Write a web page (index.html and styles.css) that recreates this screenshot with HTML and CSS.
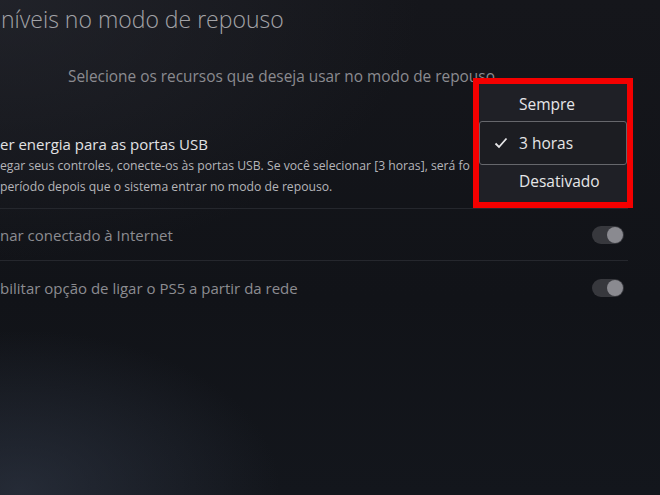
FILE: index.html
```html
<!DOCTYPE html>
<html lang="pt-BR">
  <head>
    <meta charset="UTF-8" />
    <meta name="viewport" content="width=device-width, initial-scale=1.0" />
    <title>Recursos disponíveis no modo de repouso</title>
    <link rel="stylesheet" href="styles.css">
  </head>
  <body>
    <div class="screen">
      <h1 class="page-title">níveis no modo de repouso</h1>
      <p class="page-hint">Selecione os recursos que deseja usar no modo de repouso</p>

      <div class="settings">
        <div class="setting setting-usb">
          <div class="setting-text">
            <div class="setting-name">er energia para as portas USB</div>
            <div class="setting-desc">
              egar seus controles, conecte-os às portas USB. Se você selecionar [3 horas], será fo<br>
              período depois que o sistema entrar no modo de repouso.
            </div>
          </div>
        </div>

        <div class="setting setting-off">
          <div class="setting-text">
            <div class="setting-name">nar conectado à Internet</div>
          </div>
          <div class="toggle"><span class="knob"></span></div>
        </div>

        <div class="setting setting-off">
          <div class="setting-text">
            <div class="setting-name">bilitar opção de ligar o PS5 a partir da rede</div>
          </div>
          <div class="toggle"><span class="knob"></span></div>
        </div>
      </div>

      <!-- dropdown opened over the USB option -->
      <div class="menu">
        <div class="menu-item first">Sempre</div>
        <div class="menu-item selected">
          <svg class="check" width="14" height="12" viewBox="0 0 14 12">
            <path d="M1.5 6.5 L5 10 L12.5 1.5" fill="none" stroke="#e6e6e8" stroke-width="1.8" />
          </svg>
          3 horas
        </div>
        <div class="menu-item last">Desativado</div>
      </div>
    </div>
  </body>
</html>
```

FILE: styles.css
```css
html, body {
  margin: 0;
  padding: 0;
  width: 660px;
  height: 495px;
  overflow: hidden;
  background: #121419;
}

body {
  font-family: "Open Sans", "Noto Sans", sans-serif;
  color: #e4e4e6;
}

.screen {
  position: relative;
  width: 660px;
  height: 495px;
  overflow: hidden;
  background:
    radial-gradient(ellipse 260px 160px at 20px 490px, rgba(52, 60, 76, 0.55), rgba(52, 60, 76, 0) 100%),
    radial-gradient(ellipse 420px 260px at 0 0, rgba(40, 42, 50, 0.6), rgba(40, 42, 50, 0) 100%),
    linear-gradient(180deg, #15161b 0%, #111318 60%, #13161c 100%);
}

.page-title {
  margin: 0;
  padding: 4px 0 0 1px;
  font-size: 23px;
  line-height: 31px;
  font-weight: 300;
  color: #a3a3a7;
  white-space: nowrap;
}

.page-hint {
  margin: 0;
  padding: 32px 0 0 68px;
  font-size: 15.4px;
  line-height: 20px;
  color: #8b8b90;
  white-space: nowrap;
}

.settings {
  width: 628px;
  margin-top: 46px;
}

.setting {
  display: flex;
  align-items: center;
  justify-content: space-between;
  border-bottom: 1px solid #25272d;
  padding-right: 4px;
}

.setting:last-child {
  border-bottom: none;
}

.setting-usb {
  padding: 0 0 11px 0;
}

.setting-off {
  padding-top: 1px;
  box-sizing: border-box;
  height: 52px;
}

.setting-text {
  white-space: nowrap;
}

.setting-name {
  font-size: 15px;
  line-height: 22px;
  color: #e2e2e4;
}

.setting-desc {
  font-size: 12.2px;
  line-height: 21px;
  color: #b5b5b9;
}

.setting-off .setting-name {
  font-size: 15px;
  color: #8c8c91;
}

.toggle {
  width: 32px;
  height: 18px;
  border-radius: 9px;
  background: #37383d;
  display: flex;
  align-items: center;
  justify-content: flex-end;
  flex-shrink: 0;
}

.knob {
  width: 16px;
  height: 16px;
  margin-right: 1px;
  border-radius: 50%;
  background: #8a8a90;
}

.menu {
  position: absolute;
  left: 473px;
  top: 78px;
  width: 148px;
  border: 6px solid #f40000;
  background: #1f2026;
  display: flex;
  flex-direction: column;
}

.menu-item {
  position: relative;
  height: 37px;
  line-height: 37px;
  padding-left: 40px;
  font-size: 15.5px;
  color: #e6e6e8;
}

.menu-item.first {
  line-height: 41px;
}

.menu-item.last {
  line-height: 33px;
}

.menu-item.selected {
  height: 42px;
  line-height: 42px;
  border: 1px solid #66676c;
  border-radius: 3px;
  padding-left: 39px;
  background: #1c1d22;
}

.check {
  position: absolute;
  left: 14px;
  top: 15px;
}
```
